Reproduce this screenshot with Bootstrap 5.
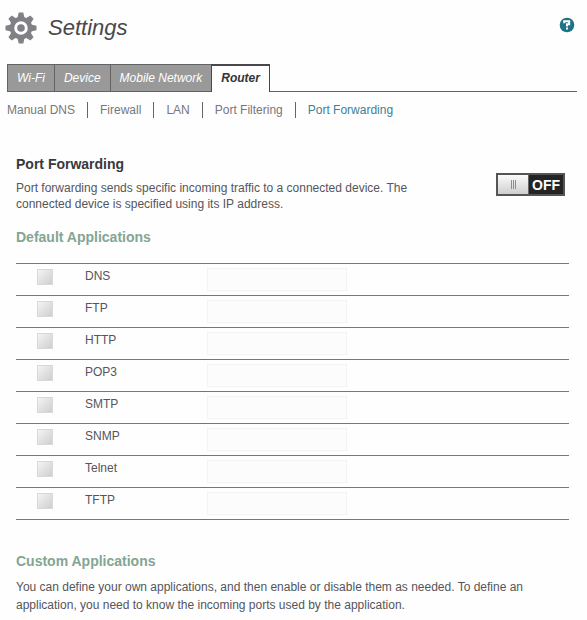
<!DOCTYPE html>
<html lang="en">
<head>
<meta charset="utf-8">
<meta name="viewport" content="width=device-width, initial-scale=1">
<title>Settings</title>
<link href="https://cdn.jsdelivr.net/npm/bootstrap@5.3.0/dist/css/bootstrap.min.css" rel="stylesheet">
<style>
body { font-family: "Liberation Sans", Arial, sans-serif; font-size: 12px; line-height: 16px; color: #55555a; background: #fefefe; }
.page { padding: 12px 10px 8px 7px; }
.page-title { font-size: 22px; line-height: 32px; font-style: italic; color: #48484c; }
.brand { gap: 11px; margin-left: -2px; }
.help-btn { width: 16px; height: 16px; margin: 5px 2px 0 0; }
.tabs { margin-top: 20px; border-bottom: 1px solid #636363; }
.tabs .nav-link { height: 27px; padding: 0 9px; border: 1px solid #636363; border-width: 1px 0 0 1px; border-radius: 0; margin: 0; background: #999; color: #fff; font-size: 12px; line-height: 26px; font-style: italic; }
.tabs .nav-link.active { height: 28px; margin-bottom: -1px; border: 1px solid #48484c; border-bottom: 0; border-top-width: 2px; background: #fefefe; color: #333338; font-weight: 700; line-height: 25px; }
.subnav { margin-top: 10px; }
.subnav a { color: #77777b; text-decoration: none; }
.subnav a.current { color: #3d8196; }
.subnav li + li { margin-left: 12px; padding-left: 12px; border-left: 1px solid #66666a; }
.content { padding: 37px 8px 0 9px; }
h2 { font-size: 14px; line-height: 18px; font-weight: 700; margin: 0; color: #38383c; }
h2.section { color: #83a593; }
.intro { margin: 7px 0 0; max-width: 420px; }
.switch { width: 69px; height: 23px; margin: 18px 4px 0 0; padding: 0; border: 2px solid #555; background: #242424; }
.knob { width: 31px; background: linear-gradient(#fafafa, #cfcfcf); border-right: 1px solid #666; gap: 1px; }
.knob i { width: 1px; height: 9px; background: #8c8c8c; }
.state { font-size: 14px; font-weight: 700; color: #fff; }
.apps { width: 100%; margin: 17px 0 0; border-top: 1px solid #77777a; border-collapse: separate; border-spacing: 0; table-layout: fixed; }
.apps td { height: 32px; padding: 0; border-bottom: 1px solid #77777a; vertical-align: top; }
.c-check { width: 69px; }
.c-name { width: 122px; }
.apps input[type=checkbox] { appearance: none; display: block; width: 16px; height: 16px; margin: 5px 0 0 21px; border: 1px solid #d8d8d8; background: linear-gradient(135deg, #f4f4f4, #cecece); }
.apps label { display: block; padding-top: 4px; }
.apps input[type=text] { display: block; width: 140px; height: 23px; margin-top: 4px; border: 1px solid #f3f3f3; background: #fcfcfc; }
.custom { margin-top: 32px; }
.custom p { margin: 8px 0 0; line-height: 18px; }
</style>
</head>
<body>
<div class="page">
  <header class="d-flex align-items-start justify-content-between">
    <div class="brand d-flex align-items-center">
      <svg width="32" height="32" viewBox="-16 -16 32 32" aria-hidden="true">
        <g fill="#818185">
          <g id="teeth"><path d="M-3.5-10L-2.3-15.5H2.3L3.5-10V10L2.3 15.5H-2.3L-3.5 10Z"/><path d="M-10-3.5L-15.5-2.3V2.3L-10 3.5H10L15.5 2.3V-2.3L10-3.5Z"/></g>
          <use href="#teeth" transform="rotate(45)"/>
          <circle r="11.2"/>
        </g>
        <circle r="5.3" fill="#818185" stroke="#fefefe" stroke-width="3"/>
      </svg>
      <h1 class="page-title m-0">Settings</h1>
    </div>
    <button type="button" class="help-btn btn p-0 border-0 d-flex" aria-label="Help">
      <svg width="16" height="16" viewBox="0 0 16 16" aria-hidden="true"><circle cx="8" cy="8" r="7.3" fill="#1f7387"/><path d="M5.2 6.2V4.3H10.2V7.3H8V9.4M8 10.5V12.5" fill="none" stroke="#fff" stroke-width="2"/></svg>
    </button>
  </header>
  <nav class="nav tabs" aria-label="Settings sections">
    <a class="nav-link" href="#">Wi-Fi</a>
    <a class="nav-link" href="#">Device</a>
    <a class="nav-link" href="#">Mobile Network</a>
    <a class="nav-link active" href="#" aria-current="page">Router</a>
  </nav>
  <ul class="subnav list-unstyled d-flex mb-0">
    <li><a href="#">Manual DNS</a></li>
    <li><a href="#">Firewall</a></li>
    <li><a href="#">LAN</a></li>
    <li><a href="#">Port Filtering</a></li>
    <li><a class="current" href="#" aria-current="page">Port Forwarding</a></li>
  </ul>
  <main class="content">
    <div class="d-flex justify-content-between align-items-start">
      <div>
        <h2>Port Forwarding</h2>
        <p class="intro">Port forwarding sends specific incoming traffic to a connected device. The connected device is specified using its IP address.</p>
      </div>
      <button type="button" class="switch d-flex flex-shrink-0" role="switch" aria-checked="false" aria-label="Port forwarding">
        <span class="knob d-flex h-100 align-items-center justify-content-center"><i></i><i></i><i></i></span>
        <span class="state flex-grow-1 align-self-center">OFF</span>
      </button>
    </div>
    <h2 class="section mt-3">Default Applications</h2>
    <table class="apps">
      <colgroup><col class="c-check"><col class="c-name"><col></colgroup>
      <tbody>
        <tr><td><input type="checkbox" id="dns"></td><td><label for="dns">DNS</label></td><td><input type="text" aria-label="DNS IP address" disabled></td></tr>
        <tr><td><input type="checkbox" id="ftp"></td><td><label for="ftp">FTP</label></td><td><input type="text" aria-label="FTP IP address" disabled></td></tr>
        <tr><td><input type="checkbox" id="http"></td><td><label for="http">HTTP</label></td><td><input type="text" aria-label="HTTP IP address" disabled></td></tr>
        <tr><td><input type="checkbox" id="pop3"></td><td><label for="pop3">POP3</label></td><td><input type="text" aria-label="POP3 IP address" disabled></td></tr>
        <tr><td><input type="checkbox" id="smtp"></td><td><label for="smtp">SMTP</label></td><td><input type="text" aria-label="SMTP IP address" disabled></td></tr>
        <tr><td><input type="checkbox" id="snmp"></td><td><label for="snmp">SNMP</label></td><td><input type="text" aria-label="SNMP IP address" disabled></td></tr>
        <tr><td><input type="checkbox" id="telnet"></td><td><label for="telnet">Telnet</label></td><td><input type="text" aria-label="Telnet IP address" disabled></td></tr>
        <tr><td><input type="checkbox" id="tftp"></td><td><label for="tftp">TFTP</label></td><td><input type="text" aria-label="TFTP IP address" disabled></td></tr>
      </tbody>
    </table>
    <section class="custom">
      <h2 class="section">Custom Applications</h2>
      <p>You can define your own applications, and then enable or disable them as needed. To define an application, you need to know the incoming ports used by the application.</p>
    </section>
  </main>
</div>
<script src="https://cdn.jsdelivr.net/npm/bootstrap@5.3.0/dist/js/bootstrap.bundle.min.js"></script>
</body>
</html>
